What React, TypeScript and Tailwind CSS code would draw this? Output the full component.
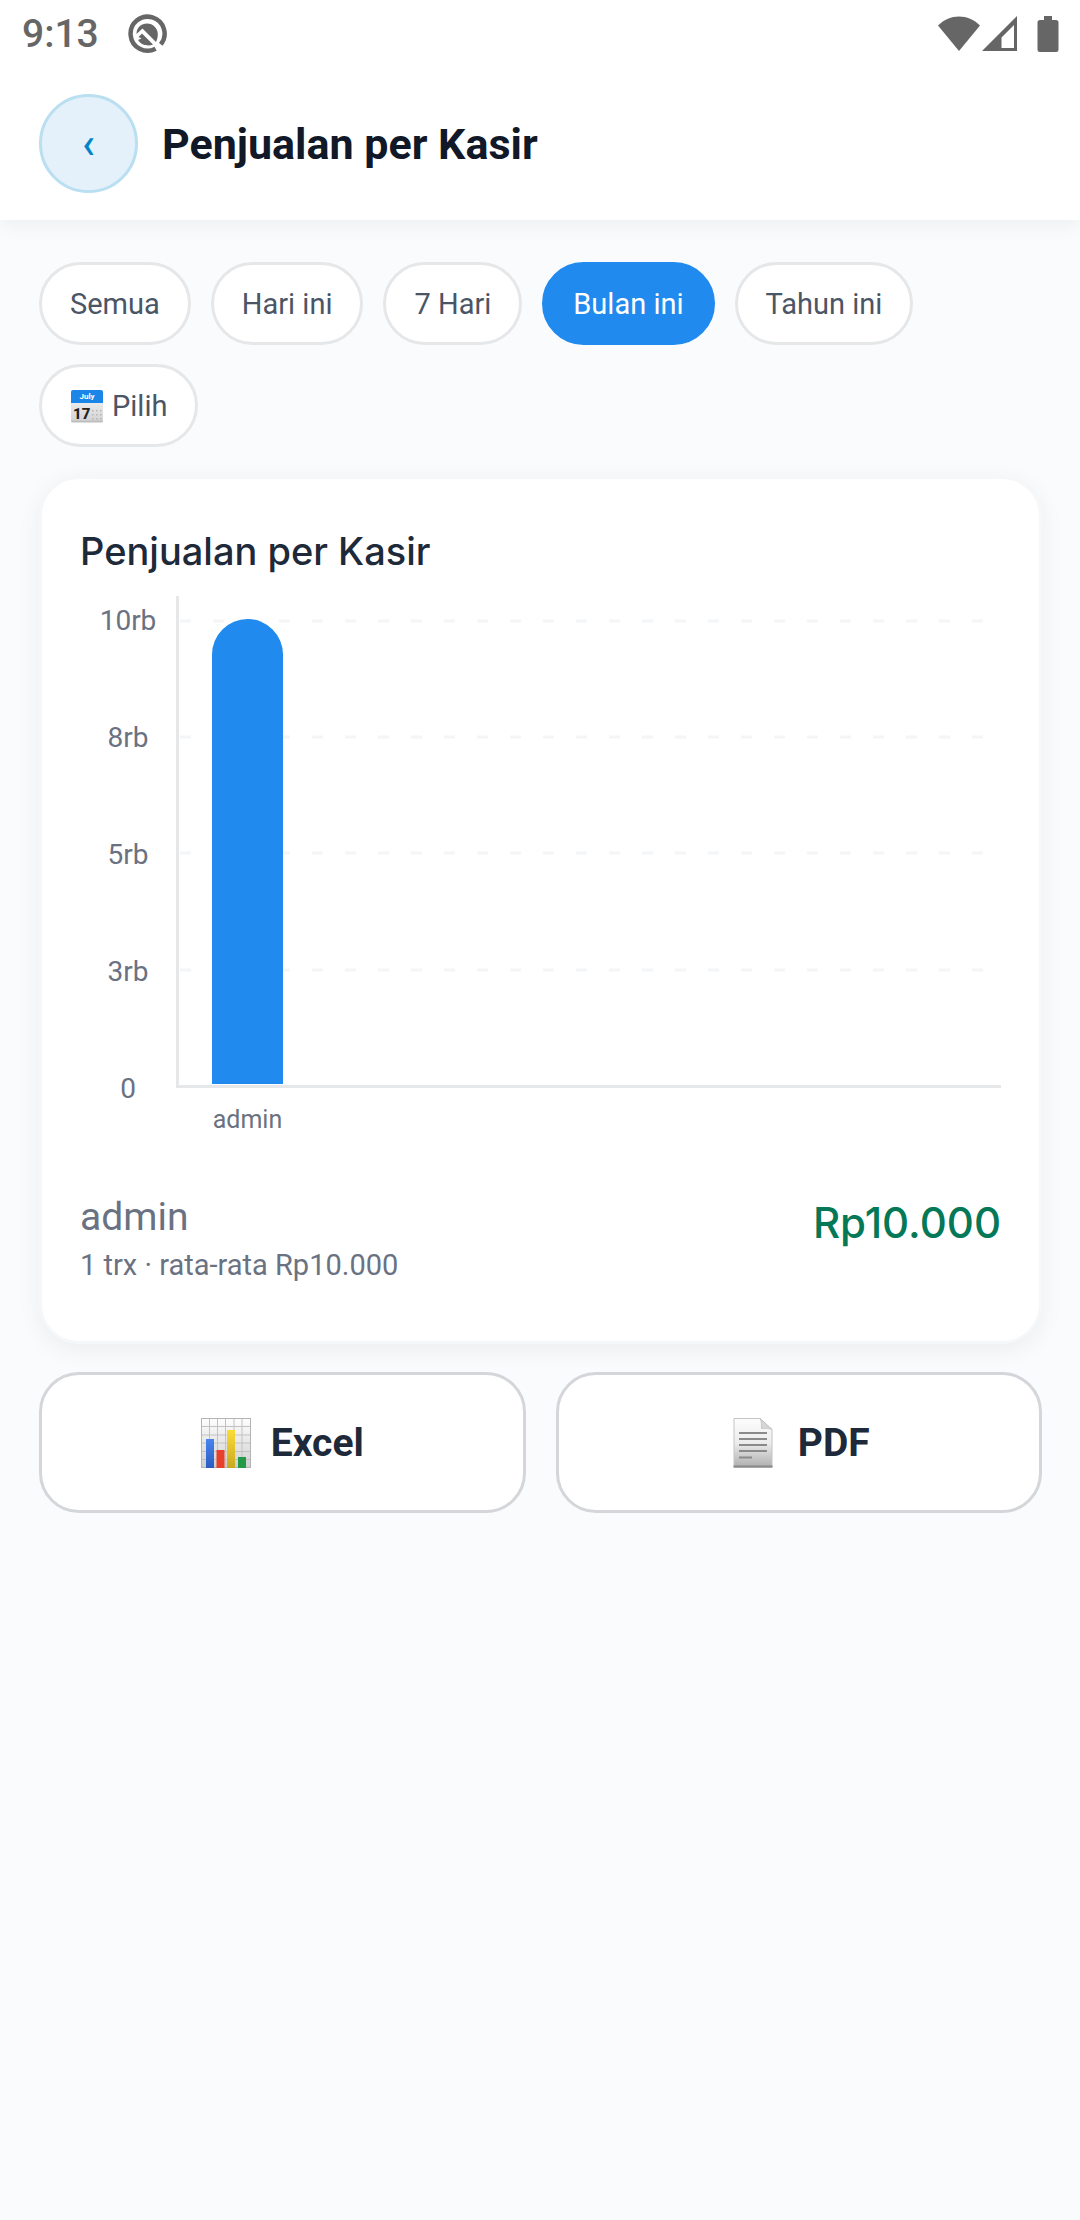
import React, { useState } from "react";

interface CashierSales {
  name: string;
  total: number;
  trx: number;
}

const FILTERS = [
  { id: "all", label: "Semua" },
  { id: "today", label: "Hari ini" },
  { id: "week", label: "7 Hari" },
  { id: "month", label: "Bulan ini" },
  { id: "year", label: "Tahun ini" },
  { id: "custom", label: "Pilih" },
];

const SALES: CashierSales[] = [{ name: "admin", total: 10000, trx: 1 }];

const Y_LABELS = ["10rb", "8rb", "5rb", "3rb", "0"];
const CHART_MAX = 10000;

const formatRupiah = (value: number) =>
  `Rp${String(value).replace(/\B(?=(\d{3})+(?!\d))/g, ".")}`;

const DebugIcon = () => (
  <svg width="40" height="40" viewBox="0 0 40 40" fill="none">
    <path
      d="M33.8 30.4A17 17 0 1 0 28.6 34.7"
      stroke="#666"
      strokeWidth="4.5"
    />
    <path d="M9.500 20C9.500 13.500 14.500 9.500 20 9.500C26 9.500 30.800 14.500 30.800 20C30.800 23 30.300 25.500 29 28L15.500 14.500z" fill="#666" />
    <path d="M15 19.500L26 30.500C21.500 32.500 14.500 31.500 11 26L14.500 24.500L11.500 23z" fill="#666" />
  </svg>
);

const WifiIcon = () => (
  <svg width="42" height="36" viewBox="0 0 42 36">
    <path d="M0 9.5C12-2.500 30-2.500 42 9.500L21 35z" fill="#666" />
  </svg>
);

const SignalIcon = () => (
  <svg width="36" height="36" viewBox="0 0 36 36">
    <path
      d="M35 0V35H0zM32 9L19.500 21.500V32H32z"
      fill="#666"
      fillRule="evenodd"
    />
  </svg>
);

const BatteryIcon = () => (
  <svg width="22" height="36" viewBox="0 0 22 36">
    <path
      d="M7 0h8v4h4a2.500 2.500 0 0 1 2.500 2.500v27A2.500 2.500 0 0 1 19 36H3A2.500 2.500 0 0 1 .5 33.500v-27A2.500 2.500 0 0 1 3 4h4z"
      fill="#666"
    />
  </svg>
);

const CalendarIcon = () => (
  <svg width="34" height="34" viewBox="0 0 34 34">
    <defs>
      <linearGradient id="calPaper" x1="0" y1="0" x2="0" y2="1">
        <stop offset="0" stopColor="#fafafa" />
        <stop offset="1" stopColor="#d2d2d2" />
      </linearGradient>
    </defs>
    <rect x="1" y="2" width="32" height="31" rx="2" fill="url(#calPaper)" />
    <path d="M1 31.500h32v.5a1.500 1.500 0 0 1-1.500 1.500h-29A1.500 1.500 0 0 1 1 32z" fill="#bdbdbd" />
    <path d="M3 1h28a2 2 0 0 1 2 2v11H1V3a2 2 0 0 1 2-2z" fill="#1a86e8" />
    <text x="17" y="10" textAnchor="middle" fontSize="8" fontWeight="700" fill="#fff">
      July
    </text>
    <text x="3" y="30" fontSize="15" fontWeight="800" fill="#222">
      17
    </text>
    <g fill="#b5b5b5">
      {[22, 26, 30].map((x) =>
        [21, 25, 29].map((y) => (
          <rect key={`${x}-${y}`} x={x} y={y} width="1.5" height="1.5" />
        )),
      )}
    </g>
  </svg>
);

const ExcelIcon = () => (
  <svg width="50" height="50" viewBox="0 0 50 50">
    <defs>
      <linearGradient id="xlPaper" x1="0" y1="0" x2="0" y2="1">
        <stop offset="0" stopColor="#fefefe" />
        <stop offset="1" stopColor="#cfcfcf" />
      </linearGradient>
      <linearGradient id="xlBlue" x1="0" y1="0" x2="0" y2="1">
        <stop offset="0" stopColor="#4a84f0" />
        <stop offset="1" stopColor="#2a5cc0" />
      </linearGradient>
      <linearGradient id="xlYellow" x1="0" y1="0" x2="0" y2="1">
        <stop offset="0" stopColor="#fbdc37" />
        <stop offset="1" stopColor="#c9a920" />
      </linearGradient>
    </defs>
    <rect x=".5" y=".5" width="49" height="49" fill="url(#xlPaper)" stroke="#b4b4b4" />
    <path
      d="M8.500 1v48M16.500 1v48M24.500 1v48M33 1v48M41 1v48M1 8.500h48M1 17h48M1 25h48M1 33.500h48M1 41.500h48"
      stroke="#c2c2c2"
    />
    <rect x="5" y="21" width="8" height="29" fill="url(#xlBlue)" />
    <rect x="15.500" y="32" width="8" height="18" fill="#e8402a" />
    <rect x="26" y="12" width="8" height="38" fill="url(#xlYellow)" />
    <rect x="37" y="39" width="8" height="11" fill="#229a48" />
  </svg>
);

const PdfIcon = () => (
  <svg width="50" height="50" viewBox="0 0 50 50">
    <defs>
      <linearGradient id="pdfPaper" x1="0" y1="0" x2="0" y2="1">
        <stop offset="0" stopColor="#fdfdfd" />
        <stop offset=".5" stopColor="#ececec" />
        <stop offset="1" stopColor="#adadad" />
      </linearGradient>
    </defs>
    <path d="M6 .5h26l12 11V49.500H6z" fill="url(#pdfPaper)" stroke="#c4c4c4" />
    <path d="M32 .5c1.500 2 1.500 6 1.500 10 4-.3 8-.3 10.500 1z" fill="#d6d6d6" stroke="#bbb" strokeWidth=".7" />
    <path d="M5.500 48.500h39" stroke="#8a8a8a" strokeWidth="2" />
    <path d="M11 15h28M11 21h28M11 27h28M11 33h28M11 39.500h13" stroke="#8a8a8a" strokeWidth="2" />
  </svg>
);

const SalesChart: React.FC<{ data: CashierSales[] }> = ({ data }) => (
  <div className="mt-[13px] flex">
    <div className="flex w-24 shrink-0 flex-col text-center text-[28px] leading-[117px] text-gray-500 -mt-[34px]">
      {Y_LABELS.map((label) => (
        <span key={label}>{label}</span>
      ))}
    </div>
    <div className="min-w-0 flex-1">
      <svg className="block h-[492px] w-full">
        <g stroke="#f4f5f7" strokeWidth="3" strokeDasharray="11 22">
          {[25, 141, 257, 374].map((y) => (
            <line key={y} x1="4" x2="98%" y1={y} y2={y} />
          ))}
        </g>
        <rect x="0" y="0" width="3" height="492" fill="#e6e7e9" />
        <rect x="0" y="489" width="100%" height="3" fill="#e6e7e9" />
        {data.map((item, i) => {
          const height = (item.total / CHART_MAX) * 465;
          const x = 36 + i * 107;
          const top = 488 - height;
          return (
            <path
              key={item.name}
              d={`M${x} 488V${top + 35.5}a35.500 35.500 0 0 1 71 0V488z`}
              fill="#208aef"
            />
          );
        })}
      </svg>
      <div className="mt-[17px] flex gap-9 pl-9">
        {data.map((item) => (
          <span
            key={item.name}
            className="w-[71px] text-center text-[25px] leading-[30px] text-gray-500"
          >
            {item.name}
          </span>
        ))}
      </div>
    </div>
  </div>
);

export default function App() {
  const [active, setActive] = useState("month");

  return (
    <div className="min-h-screen bg-[#f9fbfd] font-[Roboto,sans-serif]">
      <header className="bg-white shadow-[0_4px_20px_rgba(0,0,0,0.06)]">
        {/* status bar */}
        <div className="flex h-[67px] items-center justify-between pr-[21px] pl-[22px] text-[#666]">
          <div className="flex items-center gap-7">
            <span className="text-[39px] leading-[48px] font-medium">9:13</span>
            <DebugIcon />
          </div>
          <div className="flex items-center">
            <WifiIcon />
            <span className="ml-0.5">
              <SignalIcon />
            </span>
            <span className="ml-[19px]">
              <BatteryIcon />
            </span>
          </div>
        </div>

        <div className="flex items-center gap-6 px-[39px] pt-[27px] pb-[27px]">
          <button
            type="button"
            aria-label="Kembali"
            className="flex size-[99px] items-center justify-center rounded-full border-3 border-[#b9dff0] bg-[#e4f1fa] text-[42px] leading-[48px] font-medium text-[#0284c7]"
          >
            ‹
          </button>
          <h1 className="text-[43px] leading-[56px] font-bold text-[#111827]">
            Penjualan per Kasir
          </h1>
        </div>
      </header>

      <main className="pt-[42px] pr-[38px] pl-[39px]">
        <div className="flex flex-wrap gap-x-5 gap-y-[19px]">
          {FILTERS.map((filter) => (
            <button
              key={filter.id}
              type="button"
              onClick={() => setActive(filter.id)}
              className={`flex h-[83px] items-center gap-2 rounded-full border-3 px-7 text-[29px] leading-[36px] ${
                active === filter.id
                  ? "border-[#208aef] bg-[#208aef] text-white"
                  : "border-[#e6e7e9] bg-white text-gray-600"
              }`}
            >
              {filter.id === "custom" && <CalendarIcon />}
              {filter.label}
            </button>
          ))}
        </div>

        <section className="mt-[29px] rounded-[40px] border-3 border-[#f6f7f9] bg-white px-[38px] pt-10 pb-4 shadow-[0_6px_24px_rgba(0,0,0,0.06)]">
          <h2 className="font-[Inter,sans-serif] text-[38px] leading-[64px] font-medium text-gray-800">
            Penjualan per Kasir
          </h2>
          <SalesChart data={SALES} />

          <ul className="mt-[46px] pb-10">
            {SALES.map((item) => (
              <li key={item.name} className="flex items-start justify-between">
                <div className="text-gray-500">
                  <p className="text-[39px] leading-[48px]">{item.name}</p>
                  <p className="mt-1 text-[29px] leading-[40px]">
                    {item.trx} trx · rata-rata {formatRupiah(item.total / item.trx)}
                  </p>
                </div>
                <span className="font-[Inter,sans-serif] text-[42px] leading-[60px] font-medium text-[#047857]">
                  {formatRupiah(item.total)}
                </span>
              </li>
            ))}
          </ul>
        </section>

        <div className="mt-7 grid grid-cols-2 gap-[30px]">
          <button
            type="button"
            className="flex h-[141px] items-center justify-center gap-5 rounded-[40px] border-3 border-[#d4d6d9] bg-white text-[39px] leading-[48px] font-bold text-gray-800"
          >
            <ExcelIcon />
            Excel
          </button>
          <button
            type="button"
            className="flex h-[141px] items-center justify-center gap-5 rounded-[40px] border-3 border-[#d4d6d9] bg-white text-[39px] leading-[48px] font-bold text-gray-800"
          >
            <PdfIcon />
            PDF
          </button>
        </div>
      </main>
    </div>
  );
}
